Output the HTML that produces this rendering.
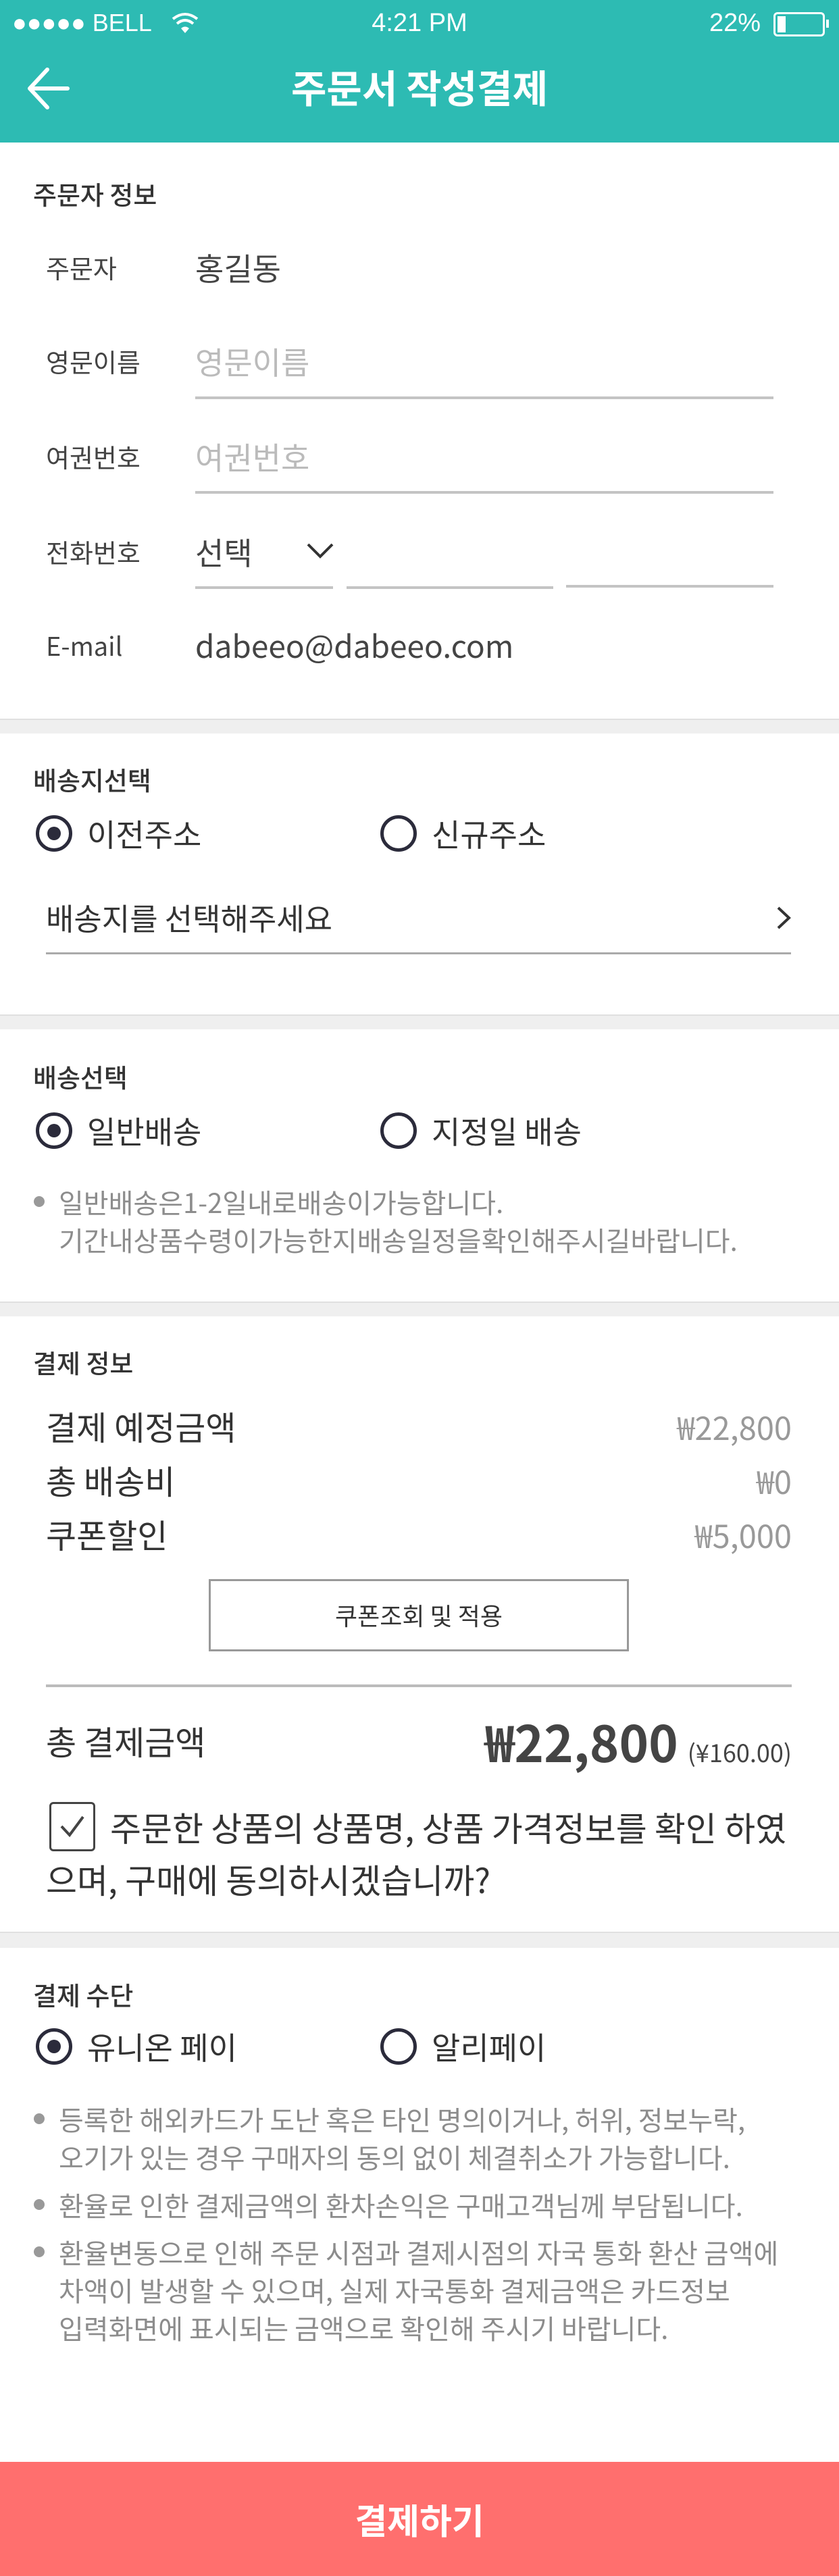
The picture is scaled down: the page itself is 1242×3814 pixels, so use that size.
<!DOCTYPE html>
<html><head><meta charset="utf-8"><style>
*{margin:0;padding:0;box-sizing:border-box}
body{width:1242px;height:3814px;position:relative;background:#fff;font-family:"Noto Sans CJK KR","Liberation Sans",sans-serif;color:#333;overflow:hidden}
.a{position:absolute;white-space:nowrap}
.t{line-height:60px;height:60px}
.sec{font-size:38px;color:#333;font-weight:500;left:49px}
.lab{font-size:38px;color:#444;left:68px}
.val{font-size:46px;color:#444;left:289px}
.ph{color:#bbb}
.ul{position:absolute;height:4px;background:#c4c4c4}
.gap{position:absolute;left:0;width:1242px;background:#efefef;border-top:2px solid #e0e0e0}
.radio{position:absolute;width:54px;height:54px;border:5px solid #2b2b3b;border-radius:50%}
.radio.on::after{content:"";position:absolute;left:12px;top:12px;width:20px;height:20px;border-radius:50%;background:#2b2b3b}
.rl{font-size:46px;color:#333}
.note{font-size:40px;color:#8c8c8c;left:87px;line-height:56px}
.dot{position:absolute;width:16px;height:16px;border-radius:50%;background:#999;left:50px}
.row{font-size:49px;color:#333;left:68px}
.rv{font-size:47px;color:#999;right:70px}
</style></head><body>
<div class="a" style="left:0;top:0;width:1242px;height:211px;background:#2dbbb3"></div>
<div class="a" style="left:18px;top:12px;font-size:36px;color:#fff;line-height:44px;font-family:'Liberation Sans',sans-serif">●●●●● BELL</div>
<svg class="a" style="left:252px;top:16px" width="44" height="36" viewBox="0 0 44 36"><path d="M4 12 Q22 -2 40 12" stroke="#fff" stroke-width="4" fill="none"/><path d="M10 19 Q22 9 34 19" stroke="#fff" stroke-width="4" fill="none"/><path d="M16 26 Q22 21 28 26 L22 33Z" fill="#fff"/></svg>
<div class="a" style="left:0;width:1242px;text-align:center;top:12px;font-size:38px;color:#fff;line-height:44px;font-family:'Liberation Sans',sans-serif">4:21 PM</div>
<div class="a" style="left:1050px;top:12px;font-size:38px;color:#fff;line-height:44px;font-family:'Liberation Sans',sans-serif">22%</div>
<div class="a" style="left:1145px;top:18px;width:76px;height:36px;border:3px solid #fff;border-radius:6px"><div style="position:absolute;left:3px;top:3px;width:12px;height:24px;background:#fff"></div></div>
<div class="a" style="left:1223px;top:29px;width:4px;height:12px;background:#fff"></div>
<svg class="a" style="left:38px;top:95px" width="72" height="72" viewBox="0 0 72 72"><path d="M62 36H6M32 8L6 36L32 64" stroke="#fff" stroke-width="6" fill="none" stroke-linecap="round" stroke-linejoin="round"/></svg>
<div class="a" style="left:0;width:1242px;text-align:center;top:90px;font-size:57px;font-weight:bold;color:#fff;line-height:76px">주문서 작성결제</div>

<div class="a t sec" style="top:257px">주문자 정보</div>
<div class="a t lab" style="top:366px">주문자</div><div class="a t val" style="top:366px">홍길동</div>
<div class="a t lab" style="top:505px">영문이름</div><div class="a t val ph" style="top:505px">영문이름</div>
<div class="ul" style="left:289px;width:856px;top:587px"></div>
<div class="a t lab" style="top:646px">여권번호</div><div class="a t val ph" style="top:646px">여권번호</div>
<div class="ul" style="left:289px;width:856px;top:727px"></div>
<div class="a t lab" style="top:787px">전화번호</div><div class="a t val" style="top:787px">선택</div>
<svg class="a" style="left:452px;top:800px" width="44" height="30" viewBox="0 0 44 30"><path d="M4 6L22 24L40 6" stroke="#333" stroke-width="4" fill="none"/></svg>
<div class="ul" style="left:289px;width:204px;top:868px"></div>
<div class="ul" style="left:513px;width:306px;top:868px"></div>
<div class="ul" style="left:838px;width:307px;top:866px"></div>
<div class="a t lab" style="top:925px">E-mail</div><div class="a t val" style="top:925px">dabeeo@dabeeo.com</div>

<div class="gap" style="top:1064px;height:22px"></div>
<div class="a t sec" style="top:1124px">배송지선택</div>
<div class="radio on" style="left:53px;top:1207px"></div><div class="a t rl" style="left:129px;top:1204px">이전주소</div>
<div class="radio" style="left:563px;top:1207px"></div><div class="a t rl" style="left:639px;top:1204px">신규주소</div>
<div class="a t" style="left:68px;top:1328px;font-size:45px;color:#333">배송지를 선택해주세요</div>
<svg class="a" style="left:1146px;top:1340px" width="28" height="38" viewBox="0 0 28 38"><path d="M6 4L22 19L6 34" stroke="#333" stroke-width="4" fill="none"/></svg>
<div class="ul" style="left:68px;width:1103px;top:1410px;height:3px;background:#aaa"></div>

<div class="gap" style="top:1502px;height:22px"></div>
<div class="a t sec" style="top:1564px">배송선택</div>
<div class="radio on" style="left:53px;top:1647px"></div><div class="a t rl" style="left:129px;top:1644px">일반배송</div>
<div class="radio" style="left:563px;top:1647px"></div><div class="a t rl" style="left:639px;top:1644px">지정일 배송</div>
<div class="dot" style="top:1771px"></div>
<div class="a note" style="top:1751px">일반배송은1-2일내로배송이가능합니다.<br>기간내상품수령이가능한지배송일정을확인해주시길바랍니다.</div>

<div class="gap" style="top:1927px;height:22px"></div>
<div class="a t sec" style="top:1987px">결제 정보</div>
<div class="a t row" style="top:2082px">결제 예정금액</div><div class="a t rv" style="top:2082px">₩22,800</div>
<div class="a t row" style="top:2162px">총 배송비</div><div class="a t rv" style="top:2162px">₩0</div>
<div class="a t row" style="top:2242px">쿠폰할인</div><div class="a t rv" style="top:2242px">₩5,000</div>
<div class="a" style="left:309px;top:2338px;width:622px;height:107px;border:3px solid #999;text-align:center;line-height:101px;font-size:36px;color:#333">쿠폰조회 및 적용</div>
<div class="ul" style="left:68px;width:1104px;top:2494px;height:4px;background:#bbb"></div>
<div class="a t row" style="top:2548px">총 결제금액</div>
<div class="a" style="right:70px;top:2530px;line-height:96px;color:#444"><span style="font-size:74px;font-weight:bold">₩22,800</span><span style="font-size:36px;margin-left:14px">(¥160.00)</span></div>
<div class="a" style="left:73px;top:2668px;width:68px;height:73px;border:3px solid #444;border-radius:6px"></div>
<svg class="a" style="left:83px;top:2684px" width="48" height="40" viewBox="0 0 48 40"><path d="M8 20L20 33L40 6" stroke="#444" stroke-width="4" fill="none"/></svg>
<div class="a" style="left:163px;top:2675px;font-size:50px;color:#333;line-height:60px">주문한 상품의 상품명, 상품 가격정보를 확인 하였</div>
<div class="a" style="left:68px;top:2752px;font-size:50px;color:#333;line-height:60px">으며, 구매에 동의하시겠습니까?</div>

<div class="gap" style="top:2860px;height:24px"></div>
<div class="a t sec" style="top:2923px">결제 수단</div>
<div class="radio on" style="left:53px;top:3003px"></div><div class="a t rl" style="left:129px;top:3000px">유니온 페이</div>
<div class="radio" style="left:563px;top:3003px"></div><div class="a t rl" style="left:639px;top:3000px">알리페이</div>
<div class="dot" style="top:3129px"></div>
<div class="a note" style="top:3109px">등록한 해외카드가 도난 혹은 타인 명의이거나, 허위, 정보누락,<br>오기가 있는 경우 구매자의 동의 없이 체결취소가 가능합니다.</div>
<div class="dot" style="top:3256px"></div>
<div class="a note" style="top:3236px">환율로 인한 결제금액의 환차손익은 구매고객님께 부담됩니다.</div>
<div class="dot" style="top:3326px"></div>
<div class="a note" style="top:3306px">환율변동으로 인해 주문 시점과 결제시점의 자국 통화 환산 금액에<br>차액이 발생할 수 있으며, 실제 자국통화 결제금액은 카드정보<br>입력화면에 표시되는 금액으로 확인해 주시기 바랍니다.</div>

<div class="a" style="left:0;top:3645px;width:1242px;height:169px;background:#ff6f6e;text-align:center;line-height:169px;font-size:52px;font-weight:bold;color:#fff">결제하기</div>
</body></html>
